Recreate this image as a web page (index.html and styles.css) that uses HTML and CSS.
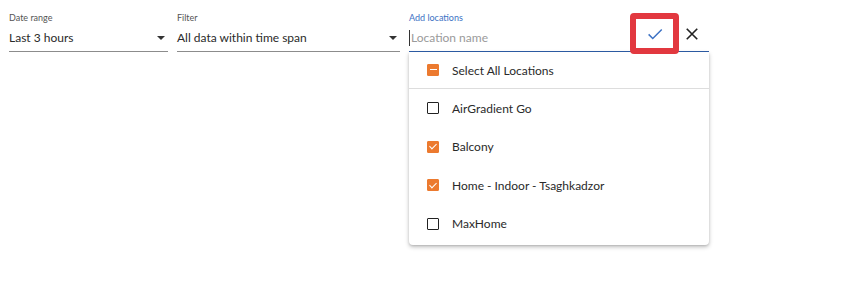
FILE: index.html
```html
<!DOCTYPE html>
<html lang="en">

<head>
	<meta charset="UTF-8">
	<meta name="viewport" content="width=device-width, initial-scale=1.0">
	<title>Locations filter</title>
	<link rel="stylesheet" href="styles.css">
</head>

<body>
	<section class="toolbar">
		<div class="field date">
			<label>Date range</label>
			<div class="select">
				<span>Last 3 hours</span>
				<i class="caret"></i>
			</div>
		</div>
		<div class="field filter">
			<label>Filter</label>
			<div class="select">
				<span>All data within time span</span>
				<i class="caret"></i>
			</div>
		</div>
		<div class="field locations">
			<label>Add locations</label>
			<div class="input">
				<span class="cursor"></span>
				<span class="placeholder">Location name</span>
			</div>
			<div class="panel">
				<div class="row all">
					<span class="box part"></span>
					<span>Select All Locations</span>
				</div>
				<div class="row">
					<span class="box"></span>
					<span>AirGradient Go</span>
				</div>
				<div class="row">
					<span class="box on"></span>
					<span>Balcony</span>
				</div>
				<div class="row">
					<span class="box on"></span>
					<span>Home - Indoor - Tsaghkadzor</span>
				</div>
				<div class="row">
					<span class="box"></span>
					<span>MaxHome</span>
				</div>
			</div>
		</div>
		<div class="actions">
			<button class="ok">
				<svg width="18" height="18" viewBox="0 0 24 24"><path d="M3.5 12.5l5.5 5.5L21 6" fill="none" stroke="#3d72c4" stroke-width="2"/></svg>
			</button>
			<button class="cancel">
				<svg width="14" height="14" viewBox="0 0 24 24"><path d="M3 3l18 18M21 3L3 21" fill="none" stroke="#222" stroke-width="2.8"/></svg>
			</button>
		</div>
	</section>
</body>

</html>
```

FILE: styles.css
```css
* {
	margin: 0;
	padding: 0;
	box-sizing: border-box;
}

html,
body {
	width: 100%;
	height: 100%;
	background: #fff;
	font-family: Lato, "Noto Sans", sans-serif;
	color: #2a2a2a;
}

.toolbar {
	display: flex;
	align-items: flex-start;
	padding: 12px 0 0 9px;
	gap: 9px;
}

.field {
	position: relative;
	display: flex;
	flex-direction: column;
}

.field label {
	font-size: 9px;
	line-height: 12px;
	color: #555;
}

.date {
	width: 159px;
}

.filter {
	width: 223px;
}

.locations {
	width: 300px;
	margin-right: -88px;
}

.select,
.input {
	display: flex;
	align-items: center;
	justify-content: space-between;
	height: 28px;
	border-bottom: 1px solid #8c8c8c;
	font-size: 12px;
}

.caret {
	width: 0;
	height: 0;
	margin-right: 3px;
	border-left: 4.5px solid transparent;
	border-right: 4.5px solid transparent;
	border-top: 4.5px solid #333;
}

.locations label {
	color: #3d72c4;
}

.input {
	justify-content: flex-start;
	border-bottom: 1.5px solid #2f5ea8;
}

.cursor {
	width: 1px;
	height: 16px;
	background: #333;
}

.placeholder {
	color: #9a9a9a;
	margin-left: 1px;
}

.panel {
	position: absolute;
	top: 40px;
	left: 0;
	width: 300px;
	background: #fff;
	border-radius: 0 0 4px 4px;
	box-shadow: 0 2px 4px rgba(0, 0, 0, .25), 0 1px 2px rgba(0, 0, 0, .1);
	padding: 0 0 2px;
	font-size: 12px;
}

.row {
	display: flex;
	align-items: center;
	height: 38.5px;
	padding-left: 18px;
	gap: 13px;
}

.row.all {
	height: 37px;
	border-bottom: 1px solid #ddd;
}

.box {
	position: relative;
	width: 12px;
	height: 12px;
	border: 1.5px solid #222;
	border-radius: 1px;
}

.box.on,
.box.part {
	background: #ec7a2f;
	border-color: #ec7a2f;
}

.box.part::after {
	content: "";
	position: absolute;
	left: 1.5px;
	right: 1.5px;
	top: 3.5px;
	height: 1.5px;
	background: #fff;
}

.box.on::after {
	content: "";
	position: absolute;
	left: 3px;
	top: 0.5px;
	width: 3px;
	height: 6px;
	border-right: 1.2px solid #fff;
	border-bottom: 1.2px solid #fff;
	transform: rotate(45deg);
}

.actions {
	display: flex;
	align-items: center;
	gap: 6px;
	margin-top: 1px;
	position: relative;
	z-index: 2;
}

.actions button {
	display: flex;
	align-items: center;
	justify-content: center;
	background: none;
	border: none;
}

.ok {
	width: 49px;
	height: 41px;
	border: 6px solid #e2383f !important;
	border-radius: 4px;
	background: #fff !important;
}

.cancel {
	width: 14px;
	height: 24px;
}
```
